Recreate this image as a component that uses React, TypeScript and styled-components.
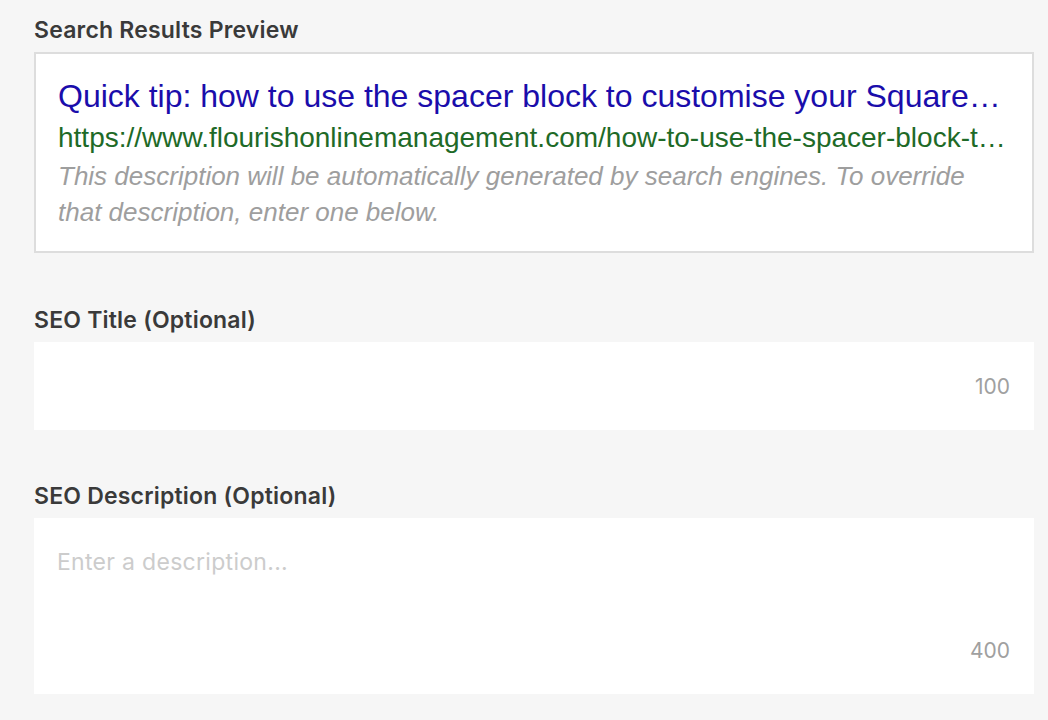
import React from "react";
import styled, { createGlobalStyle } from "styled-components";

const GlobalStyle = createGlobalStyle`
  html, body {
    margin: 0;
    padding: 0;
    background: #f6f6f6;
  }
  * { box-sizing: border-box; }
`;

const Page = styled.div`
  display: flex;
  flex-direction: column;
  width: 1000px;
  margin-left: 34px;
  padding-top: 16px;
  font-family: Inter, "Noto Sans", sans-serif;
`;

const Section = styled.section<{ $gap: number }>`
  display: flex;
  flex-direction: column;
  margin-top: ${(p) => p.$gap}px;
`;

const Label = styled.label`
  font-size: 23px;
  line-height: 28px;
  font-weight: 600;
  color: #3a3a3a;
  margin-bottom: 8px;
  letter-spacing: 0.2px;
`;

const PreviewBox = styled.div`
  border: 2px solid #dddddd;
  background: #ffffff;
  padding: 24px 22px 21px 22px;
  font-family: "Liberation Sans", Arial, sans-serif;
  display: flex;
  flex-direction: column;
`;

const PreviewTitle = styled.div`
  font-size: 32px;
  line-height: 36px;
  color: #1a0dab;
  white-space: nowrap;
  overflow: hidden;
  text-overflow: ellipsis;
`;

const PreviewUrl = styled.div`
  font-size: 28px;
  line-height: 36px;
  margin-top: 6px;
  color: #1e6a27;
  white-space: nowrap;
  overflow: hidden;
  text-overflow: ellipsis;
`;

const PreviewDesc = styled.div`
  font-size: 26px;
  line-height: 36px;
  margin-top: 2px;
  font-style: italic;
  color: #9e9e9e;
`;

const FieldBox = styled.div<{ $height: number; $multi?: boolean }>`
  height: ${(p) => p.$height}px;
  background: #ffffff;
  display: flex;
  flex-direction: ${(p) => (p.$multi ? "column" : "row")};
  align-items: ${(p) => (p.$multi ? "stretch" : "flex-end")};
  padding: ${(p) => (p.$multi ? "30px 24px 31px 23px" : "0 24px 31px 23px")};
`;

const TextInput = styled.input`
  flex: 1;
  border: none;
  outline: none;
  background: transparent;
  font-family: Inter, "Noto Sans", sans-serif;
  font-size: 23px;
  line-height: 28px;
  letter-spacing: 0.3px;
  color: #333;
  padding: 0;
`;

const TextArea = styled.textarea`
  flex: 1;
  border: none;
  outline: none;
  resize: none;
  background: transparent;
  font-family: Inter, "Noto Sans", sans-serif;
  font-size: 23px;
  line-height: 28px;
  letter-spacing: 0.3px;
  color: #333;
  padding: 0;
  &::placeholder {
    color: #cccccc;
  }
`;

const Counter = styled.span`
  font-size: 21px;
  line-height: 24px;
  color: #a0a0a0;
  align-self: flex-end;
`;

export default function App() {
  return (
    <>
      <GlobalStyle />
      <Page>
        <Section $gap={0}>
          <Label>Search Results Preview</Label>
          <PreviewBox>
            <PreviewTitle>
              Quick tip: how to use the spacer block to customise your Squarespace website layout
            </PreviewTitle>
            <PreviewUrl>
              https://www.flourishonlinemanagement.com/how-to-use-the-spacer-block-to-customise-your-squarespace-website
            </PreviewUrl>
            <PreviewDesc>
              This description will be automatically generated by search engines. To override
              that description, enter one below.
            </PreviewDesc>
          </PreviewBox>
        </Section>
        <Section $gap={53}>
          <Label>SEO Title (Optional)</Label>
          <FieldBox $height={88}>
            <TextInput type="text" />
            <Counter>100</Counter>
          </FieldBox>
        </Section>
        <Section $gap={52}>
          <Label>SEO Description (Optional)</Label>
          <FieldBox $height={176} $multi>
            <TextArea placeholder="Enter a description..." />
            <Counter>400</Counter>
          </FieldBox>
        </Section>
      </Page>
    </>
  );
}
